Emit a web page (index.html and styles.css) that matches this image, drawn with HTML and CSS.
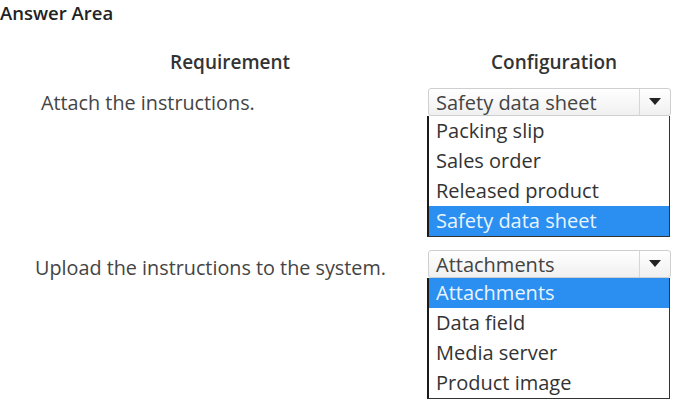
FILE: index.html
```html
<!DOCTYPE html>
<html>
<head>
<meta charset="utf-8">
<link rel="stylesheet" href="styles.css">
</head>
<body>
<div class="title">Answer Area</div>
<div class="grid">
  <div class="head head-req">Requirement</div>
  <div class="head head-conf">Configuration</div>

  <div class="req req-1">Attach the instructions.</div>
  <div class="dd">
    <div class="select">
      <span class="value">Safety data sheet</span>
      <span class="btn"><svg width="12" height="8" viewBox="0 0 12 8"><path d="M0 0h12L6 7z" fill="#222"/></svg></span>
    </div>
    <ul class="list">
      <li>Packing slip</li>
      <li>Sales order</li>
      <li>Released product</li>
      <li class="sel">Safety data sheet</li>
    </ul>
  </div>

  <div class="req req-2">Upload the instructions to the system.</div>
  <div class="dd dd-2">
    <div class="select">
      <span class="value">Attachments</span>
      <span class="btn"><svg width="12" height="8" viewBox="0 0 12 8"><path d="M0 0h12L6 7z" fill="#222"/></svg></span>
    </div>
    <ul class="list">
      <li class="sel">Attachments</li>
      <li>Data field</li>
      <li>Media server</li>
      <li>Product image</li>
    </ul>
  </div>
</div>
</body>
</html>
```

FILE: styles.css
```css
html, body {
  margin: 0;
  padding: 0;
  background: #fff;
}
body {
  font-family: "Open Sans", "Noto Sans", sans-serif;
  color: #3a3a3a;
  width: 675px;
  height: 401px;
  overflow: hidden;
}
.title {
  font-size: 18.5px;
  font-weight: 600;
  color: #222;
  line-height: 26px;
  height: 26px;
}
.grid {
  display: grid;
  grid-template-columns: 427px 244px;
  margin-top: 24px;
}
.head {
  font-size: 19px;
  font-weight: 600;
  color: #333;
  line-height: 24px;
  height: 38px;
}
.head-req {
  padding-left: 170px;
}
.head-conf {
  padding-left: 64px;
}
.req {
  font-size: 19.8px;
  line-height: 24px;
  color: #444;
}
.req-1 {
  padding-left: 41px;
  padding-top: 3px;
}
.req-2 {
  padding-left: 35px;
  padding-top: 19px;
}
.dd {
  display: flex;
  flex-direction: column;
}
.dd-2 {
  margin-top: 13px;
}
.select {
  height: 26px;
  border: 1px solid #cfcfcf;
  border-radius: 3px;
  background: linear-gradient(#fff, #f0f0f0);
  display: flex;
  align-items: stretch;
  margin-left: 1px;
}
.value {
  flex: 1;
  font-size: 20px;
  line-height: 27px;
  color: #444;
  padding-left: 7px;
  white-space: nowrap;
}
.btn {
  width: 30px;
  border-left: 1px solid #d6d6d6;
  display: flex;
  align-items: center;
  justify-content: center;
}
.list {
  list-style: none;
  margin: 0;
  padding: 0;
  width: 240px;
  border-left: 2px solid #1a1a1a;
  border-right: 1px solid #333;
  border-bottom: 1px solid #333;
}
.list li {
  font-size: 20px;
  height: 30px;
  line-height: 30px;
  padding-left: 7px;
  color: #333;
  white-space: nowrap;
}
.list li.sel {
  background: #2a8ff0;
  color: #e8f4ff;
}
```
